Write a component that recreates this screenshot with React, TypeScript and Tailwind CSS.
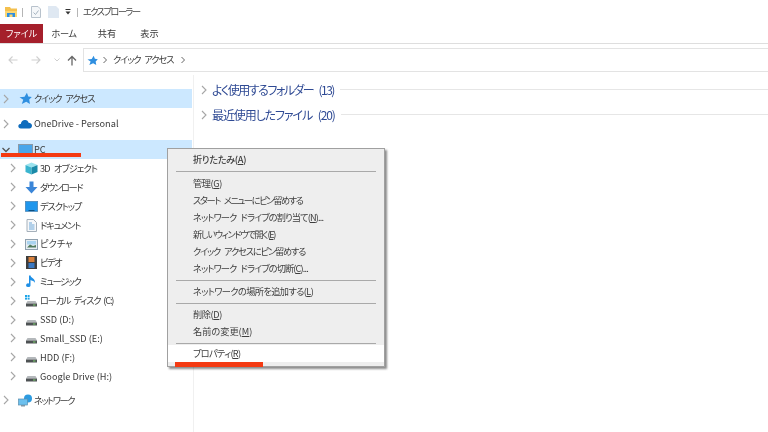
import React from "react";

const Chev = ({ down = false }: { down?: boolean }) => (
  <svg width="8" height="10" viewBox="0 0 8 10" className="shrink-0">
    {down ? (
      <path d="M0.5 3 L4 6.5 L7.5 3" fill="none" stroke="#555" strokeWidth="1.3" />
    ) : (
      <path d="M2 1 L6 5 L2 9" fill="none" stroke="#a6a6a6" strokeWidth="1.1" />
    )}
  </svg>
);

const Star = ({ size = 13 }: { size?: number }) => (
  <svg width={size} height={size} viewBox="0 0 14 14">
    <path d="M8.5 0.8 L10 4.8 L13.8 5.3 L11 8.2 L11.8 12.8 L7.8 10.6 L3 12.8 L4.6 8.4 L0.6 5.6 L6 5 Z" fill="#2f8fe0" />
  </svg>
);

const Cloud = () => (
  <svg width="14" height="10" viewBox="0 0 14 10">
    <path d="M3 9.5 C0.8 9.5 0 8 0.4 6.6 C0.8 5.4 1.8 5 2.8 5 C3.2 2.4 5 0.8 7.2 1 C9 1.1 10.2 2.2 10.6 3.8 C12.6 3.8 14 5.2 14 6.8 C14 8.4 12.8 9.5 11.4 9.5 Z" fill="#0f6cbd" />
  </svg>
);

const Monitor = () => (
  <svg width="15" height="12" viewBox="0 0 15 12">
    <rect x="0.5" y="0.5" width="14" height="9.5" fill="#4aa6ea" stroke="#8a9aa8" />
    <rect x="4" y="10" width="7" height="1.5" fill="#8a9aa8" />
  </svg>
);

const Cube = () => (
  <svg width="13" height="13" viewBox="0 0 13 13">
    <path d="M6.5 0.5 L12.5 3 L6.5 5.5 L0.5 3 Z" fill="#9be3ee" />
    <path d="M0.5 3 L6.5 5.5 V12.5 L0.5 10 Z" fill="#3ab5cf" />
    <path d="M12.5 3 L6.5 5.5 V12.5 L12.5 10 Z" fill="#1a8aa8" />
  </svg>
);

const DownArrow = () => (
  <svg width="13" height="13" viewBox="0 0 13 13">
    <path d="M4.5 0.5 H8.5 V6 H12.5 L6.5 12.5 L0.5 6 H4.5 Z" fill="#3b86d8" />
  </svg>
);

const Desktop = () => (
  <svg width="13" height="11" viewBox="0 0 13 11">
    <rect x="0.3" y="0.3" width="12.4" height="10.2" fill="#1f96ec" stroke="#4a7ea8" strokeWidth="0.6" />
    <rect x="3.5" y="9" width="6" height="1" fill="#0b4f80" />
  </svg>
);

const Doc = () => (
  <svg width="11" height="13" viewBox="0 0 11 13">
    <path d="M1 0.5 H7.5 L10.5 3.5 V12.5 H1 Z" fill="#f6f8fa" stroke="#a5b0ba" />
    <path d="M3 4 H6 M3 6 H8.5 M3 8 H8.5 M3 10 H8.5" stroke="#5f9fd6" strokeWidth="0.9" />
  </svg>
);

const Pic = () => (
  <svg width="13" height="11" viewBox="0 0 13 11">
    <rect x="0.5" y="0.5" width="12" height="10" fill="#e6edf2" stroke="#8fa0ae" />
    <rect x="2" y="2" width="9" height="3.5" fill="#a9d3ef" />
    <path d="M2 8.5 L5 5.5 L8 7 L11 6 V8.5 Z" fill="#4f7a5c" />
  </svg>
);

const Film = () => (
  <svg width="11" height="13" viewBox="0 0 11 13">
    <rect x="0" y="0" width="11" height="13" fill="#3d3d3d" />
    <rect x="2.5" y="1" width="6" height="5" fill="#d9803c" />
    <rect x="2.5" y="7" width="6" height="5" fill="#3a78c2" />
  </svg>
);

const Note = () => (
  <svg width="11" height="14" viewBox="0 0 11 14">
    <path d="M4.5 0.5 V10 A2.2 1.9 0 1 1 3 8.4 V0.5 Z" fill="#1e8fe6" />
    <path d="M4 0.5 C5 3 9.5 3.5 9 8 C8.5 6 6 5.5 4 5 Z" fill="#1e8fe6" />
  </svg>
);

const Drive = ({ win = false }: { win?: boolean }) => (
  <svg width="13" height="12" viewBox="0 0 13 12">
    {win && (
      <g fill="#1ea5e8">
        <rect x="0" y="0" width="2" height="2" />
        <rect x="2.6" y="0" width="2" height="2" />
        <rect x="0" y="2.6" width="2" height="2" />
        <rect x="2.6" y="2.6" width="2" height="2" />
      </g>
    )}
    <path d="M2.5 6 H10.5 L12 8.5 H1 Z" fill="#b4b8bb" />
    <rect x="1" y="8.5" width="11" height="3" fill="#4e5254" />
    <rect x="8" y="9.5" width="2.5" height="1" fill="#79d06a" />
  </svg>
);

const Net = () => (
  <svg width="15" height="13" viewBox="0 0 15 13">
    <circle cx="10" cy="4.5" r="4" fill="#2d9be0" />
    <rect x="0.5" y="5" width="9" height="6" fill="#6cc0ee" stroke="#5b8fb0" strokeWidth="0.7" />
    <rect x="3" y="11" width="4" height="1.5" fill="#7f97a8" />
  </svg>
);

const Row = ({ icon, label, hl = false, down = false, cls, t = "" }: { icon: React.ReactNode; label: string; hl?: boolean; down?: boolean; cls: string; t?: string }) => (
  <div className={`flex items-center ${cls} ${hl ? "bg-[#cce8ff]" : ""}`}>
    <span className="w-[17px] shrink-0 flex justify-start pl-[2px]"><Chev down={down} /></span>
    <span className="w-[16px] shrink-0 flex justify-center">{icon}</span>
    <span className={`ml-[1px] whitespace-pre ${t}`}>{label}</span>
  </div>
);

const Child = ({ icon, label, t = "" }: { icon: React.ReactNode; label: string; t?: string }) => (
  <div className="flex items-center h-[18.9px] pl-[9px]">
    <span className="w-[15px] shrink-0 flex"><Chev /></span>
    <span className="w-[15px] shrink-0 flex justify-center">{icon}</span>
    <span className={`ml-[1px] whitespace-pre ${t}`}>{label}</span>
  </div>
);

const U = ({ c }: { c: string }) => <span className="underline">{c}</span>;

const Item = ({ children, hl = false, t = "" }: { children: React.ReactNode; hl?: boolean; t?: string }) => (
  <div className={`h-[17px] pl-[25px] flex items-center whitespace-pre ${t} ${hl ? "bg-white" : ""}`}>{children}</div>
);

const Sep = ({ my }: { my: string }) => <div className={`h-px mx-[8px] bg-[#a9a9a9] ${my}`} />;

export default function App() {
  return (
    <div
      className="relative w-[768px] h-[432px] overflow-hidden bg-white text-[#3a3a3a] text-[9.2px] leading-none blur-[0.3px] [font-feature-settings:'palt']"
      style={{ fontFamily: '"Noto Sans CJK JP", "Noto Sans", sans-serif' }}
    >
      {/* title bar */}
      <div className="h-[24px] flex items-center pl-[5px]">
        <svg width="12" height="12" viewBox="0 0 12 12">
          <path d="M0 1 H5 L6 2.5 H12 V11 H0 Z" fill="#f4c04e" />
          <rect x="0" y="5" width="12" height="6" fill="#fbd774" />
          <rect x="2" y="7" width="8" height="4" fill="#2f8fe0" />
          <rect x="4.5" y="8.5" width="3" height="2.5" fill="#fbd774" />
        </svg>
        <span className="ml-[5px] w-px h-[9px] bg-[#b5b5b5]" />
        <svg width="10" height="12" viewBox="0 0 10 12" className="ml-[8px]">
          <path d="M0.5 0.5 H7 L9.5 3 V11.5 H0.5 Z" fill="#f5f7f9" stroke="#b8c2cc" />
          <path d="M2.5 6.5 L4.5 8.5 L7.5 4.5" fill="none" stroke="#a5b3c0" />
        </svg>
        <svg width="11" height="12" viewBox="0 0 11 12" className="ml-[7px]">
          <path d="M0 0 H8 L11 3 V12 H0 Z" fill="#dfe8f2" />
        </svg>
        <svg width="6" height="6" viewBox="0 0 6 6" className="ml-[6px]">
          <path d="M0.5 0.5 H5.5" stroke="#333" />
          <path d="M0.5 2.5 H5.5 L3 5.5 Z" fill="#333" />
        </svg>
        <span className="ml-[6px] w-px h-[9px] bg-[#b5b5b5]" />
        <span className="ml-[5px] text-[#444] whitespace-nowrap tracking-[-1.5px]">エクスプローラー</span>
      </div>

      {/* ribbon tabs */}
      <div className="h-[20px] flex items-stretch border-b border-[#dedede] whitespace-nowrap">
        <div className="w-[43px] bg-[#a51f2b] text-white flex items-center justify-center">ファイル</div>
        <div className="ml-[10px] flex items-center w-[22px] justify-center tracking-[-0.4px]">ホーム</div>
        <div className="ml-[23px] flex items-center w-[18px] justify-center">共有</div>
        <div className="ml-[24px] flex items-center w-[19px] justify-center">表示</div>
      </div>

      {/* address bar */}
      <div className="h-[26px] mt-[3px] flex items-center">
        <svg width="10" height="10" viewBox="0 0 10 10" className="ml-[8px]">
          <path d="M9.5 5 H1 M4.5 1.5 L1 5 L4.5 8.5" fill="none" stroke="#cfcfcf" strokeWidth="1.1" />
        </svg>
        <svg width="10" height="10" viewBox="0 0 10 10" className="ml-[13px]">
          <path d="M0.5 5 H9 M5.5 1.5 L9 5 L5.5 8.5" fill="none" stroke="#cfcfcf" strokeWidth="1.1" />
        </svg>
        <svg width="6" height="4" viewBox="0 0 6 4" className="ml-[13px]">
          <path d="M0.5 0.5 L3 3 L5.5 0.5" fill="none" stroke="#cfcfcf" />
        </svg>
        <svg width="10" height="11" viewBox="0 0 10 11" className="ml-[7px]">
          <path d="M5 10.5 V1.5 M1 5.5 L5 1.5 L9 5.5" fill="none" stroke="#666" strokeWidth="1.3" />
        </svg>
        <div className="ml-[6px] flex-1 h-[24px] border-y border-l border-[#e3e3e3] flex items-center pl-[3px] whitespace-pre">
          <Star size={11} />
          <svg width="6" height="8" viewBox="0 0 6 8" className="ml-[4px]">
            <path d="M1.5 1 L4.5 4 L1.5 7" fill="none" stroke="#666" />
          </svg>
          <span className="ml-[5px] tracking-[-1.1px] [word-spacing:3px]">クイック アクセス</span>
          <svg width="6" height="8" viewBox="0 0 6 8" className="ml-[7px]">
            <path d="M1.5 1 L4.5 4 L1.5 7" fill="none" stroke="#666" />
          </svg>
        </div>
      </div>

      {/* body */}
      <div className="mt-[2px] h-[357px] flex">
        <div className="w-[194px] shrink-0 border-r border-[#f0f0f0] pt-[14px]">
          <div className="w-[192px]">
            <Row cls="h-[19px]" hl icon={<Star />} label="クイック アクセス" t="tracking-[-1.1px] [word-spacing:3px]" />
            <Row cls="h-[19px] mt-[6px]" icon={<Cloud />} label="OneDrive - Personal" />
            <Row cls="h-[19px] mt-[7px]" hl down icon={<Monitor />} label="PC" />
            <div>
              <Child icon={<Cube />} label="3D オブジェクト" t="tracking-[-0.85px] [word-spacing:3px]" />
              <Child icon={<DownArrow />} label="ダウンロード" t="tracking-[-1.3px]" />
              <Child icon={<Desktop />} label="デスクトップ" t="tracking-[-1.1px]" />
              <Child icon={<Doc />} label="ドキュメント" t="tracking-[-1.1px]" />
              <Child icon={<Pic />} label="ピクチャ" />
              <Child icon={<Film />} label="ビデオ" t="tracking-[-1.5px]" />
              <Child icon={<Note />} label="ミュージック" t="tracking-[-1.4px]" />
              <Child icon={<Drive win />} label="ローカル ディスク (C:)" t="tracking-[-1.15px] [word-spacing:2px]" />
              <Child icon={<Drive />} label="SSD (D:)" />
              <Child icon={<Drive />} label="Small_SSD (E:)" />
              <Child icon={<Drive />} label="HDD (F:)" />
              <Child icon={<Drive />} label="Google Drive (H:)" />
            </div>
            <Row cls="h-[19px] mt-[5px]" icon={<Net />} label="ネットワーク" t="tracking-[-1.4px]" />
          </div>
        </div>
        <div className="flex-1 pl-[6px] pt-[5px] text-[#2f4a94] text-[12px]">
          <div className="h-[19px] flex items-center">
            <Chev />
            <span className="ml-[4px] whitespace-nowrap tracking-[-1.5px] [word-spacing:4px]">よく使用するフォルダー (13)</span>
            <span className="ml-[6px] flex-1 h-px bg-[#e6e6e6]" />
          </div>
          <div className="h-[19px] mt-[6px] flex items-center">
            <Chev />
            <span className="ml-[4px] whitespace-nowrap tracking-[-1.1px] [word-spacing:4px]">最近使用したファイル (20)</span>
            <span className="ml-[6px] flex-1 h-px bg-[#e6e6e6]" />
          </div>
        </div>
      </div>

      {/* red annotation */}
      <div className="absolute left-[1px] top-[153px] w-[80px] h-[4px] bg-[#f43a12]" />

      {/* context menu */}
      <div className="absolute left-[167px] top-[148px] w-[218px] h-[219px] bg-[#eeeeee] border border-[#a0a0a0] shadow-[2px_2px_2px_rgba(0,0,0,0.45)] pt-[2px] text-[#3d3d3d]">
        <Item t="tracking-[-0.3px]"><span className="font-medium">折りたたみ(<U c="A" />)</span></Item>
        <Sep my="my-[3px]" />
        <div className="mt-[3px]">
          <Item t="tracking-[-0.4px]">管理(<U c="G" />)</Item>
          <Item t="tracking-[-1.35px] [word-spacing:3px]">スタート メニューにピン留めする</Item>
          <Item t="tracking-[-0.85px] [word-spacing:3px]">ネットワーク ドライブの割り当て(<U c="N" />)...</Item>
          <Item t="tracking-[-1.3px]">新しいウィンドウで開く(<U c="E" />)</Item>
          <Item t="tracking-[-1.15px] [word-spacing:3px]">クイック アクセスにピン留めする</Item>
          <Item t="tracking-[-0.85px] [word-spacing:3px]">ネットワーク ドライブの切断(<U c="C" />)...</Item>
        </div>
        <Sep my="mt-[3px] mb-[2px]" />
        <Item t="tracking-[-0.6px]">ネットワークの場所を追加する(<U c="L" />)</Item>
        <Sep my="mt-[3px] mb-[2px]" />
        <Item t="tracking-[-0.4px]">削除(<U c="D" />)</Item>
        <Item>名前の変更(<U c="M" />)</Item>
        <Sep my="mt-[3px] mb-[1px]" />
        <Item hl t="tracking-[-0.7px]">プロパティ(<U c="R" />)</Item>
      </div>
      <div className="absolute left-[175px] top-[362px] w-[88px] h-[5px] bg-[#f43a12]" />
    </div>
  );
}
